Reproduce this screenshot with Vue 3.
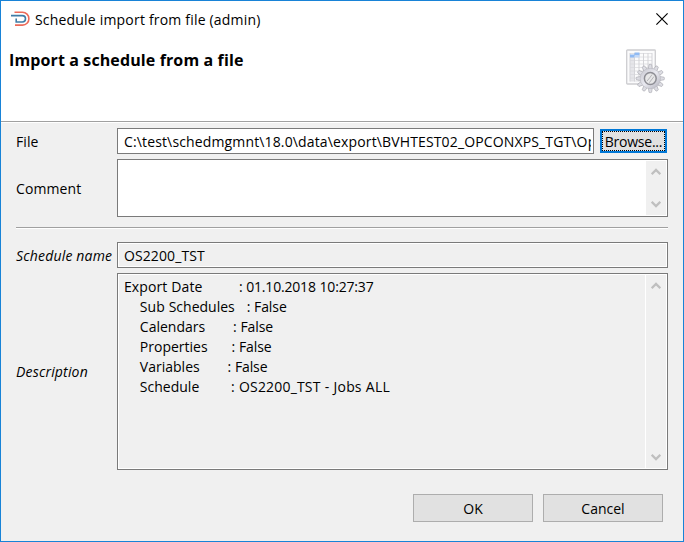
<script setup>
import { ref } from 'vue'

const file = ref('C:\\test\\schedmgmnt\\18.0\\data\\export\\BVHTEST02_OPCONXPS_TGT\\Op')
const scheduleName = ref('OS2200_TST')
const gap = (n) => ' '.repeat(n)
const description = [
  { key: 'date', label: 'Export Date' + gap(9), value: ': 01.10.2018 10:27:37' },
  { key: 'sub', label: gap(4) + 'Sub Schedules' + gap(3), value: ': False' },
  { key: 'cal', label: gap(4) + 'Calendars' + gap(7), value: ': False' },
  { key: 'prop', label: gap(4) + 'Properties' + gap(6), value: ': False' },
  { key: 'var', label: gap(4) + 'Variables' + gap(7), value: ': False' },
  { key: 'sched', label: gap(4) + 'Schedule' + gap(8), value: ': OS2200_TST - Jobs ALL' },
]
const teeth = Array.from({ length: 12 }, (_, i) => i * 30)
</script>

<template>
  <div class="window">
    <header class="head">
      <div class="titlebar">
        <svg class="logo" width="20" height="16" viewBox="0 0 20 16" fill="none">
          <path d="M3.5 1.3h8a6.2 6.2 0 0 1 0 12.8H4" stroke="#ec6a59" stroke-width="1.6" />
          <path d="M0 4.6h11.3a3.2 3.2 0 0 1 0 6.4H5.2V7.4" stroke="#3f7ca6" stroke-width="1.6" />
        </svg>
        <span class="title">Schedule import from file (admin)</span>
        <svg class="close" width="12" height="12" viewBox="0 0 12 12">
          <path d="M.4.4l11.2 11.2M11.6.4L.4 11.6" stroke="#000" stroke-width="1.15" />
        </svg>
      </div>
      <div class="banner">
        <h1>Import a schedule from a file</h1>
        <svg class="art" width="40" height="46" viewBox="0 0 40 46">
          <defs>
            <linearGradient id="metal" x1="0" y1="0" x2="1" y2="1">
              <stop offset="0" stop-color="#c5c5ce" />
              <stop offset=".5" stop-color="#e9e9f0" />
              <stop offset="1" stop-color="#b0b0ba" />
            </linearGradient>
          </defs>
          <rect x="1.7" y="2" width="28.6" height="34" rx=".8" fill="#fbfbfc" stroke="#cdcdd0" stroke-width="1.3" />
          <path d="M5 5.5h22M5 9h22M5 12.5h22M5 16h22M5 19.5h22M5 23h22M5 26.5h22M5 30h22M5 33h22" stroke="#e2e2e5" />
          <path d="M5 5v28.500M9.500 5v28.500M14 5v28.500M18.500 5v28.500M23 5v28.500M27 5v28.500" stroke="#d3d3d7" />
          <path d="M5 9h4.500v24H5z" fill="#d8d9de" opacity=".6" />
          <path d="M5 6.500h4.500v3H5zM9.500 4.500h5v3h-5z" fill="#8fbaf4" />
          <path d="M9.500 7.500h5v2h-5z" fill="#c3d9f8" />
          <g transform="translate(25.300 30.500)">
            <path v-for="angle in teeth" :key="angle" :transform="`rotate(${angle})`" d="M-2-9.500L-1.300-13.800Q0-14.500 1.300-13.800L2-9.500z" fill="#dedee4" stroke="#a5a5ac" stroke-width=".6" />
            <circle r="10.200" fill="url(#metal)" stroke="#b4b4bb" stroke-width=".4" />
            <circle r="5.900" fill="#e7e7e8" stroke="#8e8e95" stroke-width="1.500" />
            <path d="M-3.200 2.500C-2 .5.5-1.500 1.800-4M-1 4.200L3.700-2" fill="none" stroke="#b5b5b9" stroke-width="1" />
          </g>
        </svg>
      </div>
    </header>

    <main class="form">
      <div class="row">
        <label>File</label>
        <div class="box file"><span class="clip">{{ file }}</span></div>
        <button class="browse"><span>Browse...</span></button>
      </div>
      <div class="row comment">
        <label>Comment</label>
        <div class="box">
          <div class="scroll">
            <svg width="10" height="8" viewBox="0 0 10 8"><path d="M.7 6.2L5 1.9l4.3 4.3" /></svg>
            <svg width="10" height="8" viewBox="0 0 10 8"><path d="M.7 1.8L5 6.1l4.3-4.3" /></svg>
          </div>
        </div>
      </div>
      <div class="rule"></div>
      <div class="row">
        <label class="italic">Schedule name</label>
        <div class="box readonly"><span class="clip">{{ scheduleName }}</span></div>
      </div>
      <div class="row description">
        <label class="italic">Description</label>
        <div class="box readonly">
          <div class="lines">
            <div v-for="line in description" :key="line.key" :class="line.key"><span>{{ line.label }}</span><span class="value">{{ line.value }}</span></div>
          </div>
          <div class="scroll">
            <svg width="10" height="8" viewBox="0 0 10 8"><path d="M.7 6.2L5 1.9l4.3 4.3" /></svg>
            <svg width="10" height="8" viewBox="0 0 10 8"><path d="M.7 1.8L5 6.1l4.3-4.3" /></svg>
          </div>
        </div>
      </div>
      <footer class="actions">
        <button>OK</button>
        <button>Cancel</button>
      </footer>
    </main>
  </div>
</template>

<style>
body { margin: 0; overflow: hidden; }
</style>

<style scoped>
* { box-sizing: border-box; }
.window {
  width: 684px;
  height: 542px;
  border: 1px solid #1883d7;
  background: #f0f0f0;
  color: #000;
  font: 14px/20px "Open Sans", "Noto Sans", sans-serif;
  display: flex;
  flex-direction: column;
}
.head { height: 121px; flex: none; background: #fff; border-bottom: 1px solid #a0a0a0; box-shadow: 0 1px #fff; }
.titlebar { height: 36px; display: flex; align-items: center; padding: 0 15px 0 10px; }
.logo { flex: none; margin-right: 4px; }
.title { white-space: nowrap; letter-spacing: .19px; padding-top: 2px; }
.close { margin-left: auto; }
.banner { display: flex; justify-content: space-between; padding: 11px 18px 0 8px; }
h1 { margin: 1px 0 0; font-size: 16px; line-height: 22px; font-weight: 700; letter-spacing: .12px; white-space: nowrap; }
.form { padding: 6px 15px 0; display: flex; flex-direction: column; gap: 5px; }
.row { display: flex; height: 26px; }
.row label { width: 101px; flex: none; align-self: center; white-space: nowrap; padding-top: 2px; letter-spacing: .1px; }
.row label.italic { font-style: italic; letter-spacing: .18px; }
.box { flex: 1; min-width: 0; display: flex; border: 1px solid #7a7a7a; background: #fff; padding: 1px; }
.box.file { flex: none; width: 477px; margin-right: 6px; letter-spacing: .14px; }
.box.readonly { background: #f0f0f0; box-shadow: inset 0 0 0 1px #fff; }
.clip { flex: 1; overflow: hidden; white-space: pre; margin: 2px 1px 0 5px; letter-spacing: inherit; }
.readonly .clip { letter-spacing: .1px; }
.comment { height: 58px; }
.scroll { width: 20px; margin-left: auto; background: #f0f0f0; display: flex; flex-direction: column; justify-content: space-between; align-items: center; padding: 7px 0 7px; }
.scroll path { fill: none; stroke: #bfbfbf; stroke-width: 2.2; }
.rule { height: 2px; margin: 5px 0 8px; background: #fff; border-top: 1px solid #a0a0a0; }
.description { height: 197px; }
.description label { padding-top: 0; }
.description .scroll { box-shadow: -1px 0 #fff; }
.lines { padding: 2px 0 0 5px; white-space: pre; word-spacing: .33px; }
.date { letter-spacing: .08px; }
.date .value { letter-spacing: -.18px; }
.value { letter-spacing: -.1px; }
.sched .value { letter-spacing: .18px; }
button { font: inherit; color: #000; padding: 2px 0 0; background: #e1e1e1; border: 1px solid #adadad; }
.browse { width: 67px; height: 24px; margin-top: 1px; padding: 0; border: 2px solid #0078d7; display: flex; }
.browse span { flex: 1; height: 20px; line-height: 19px; border: 1px dotted #000; white-space: nowrap; letter-spacing: -.25px; }
.actions { display: flex; justify-content: flex-end; gap: 10px; padding: 19px 5px 0 0; }
.actions button { width: 120px; height: 28px; }
</style>
